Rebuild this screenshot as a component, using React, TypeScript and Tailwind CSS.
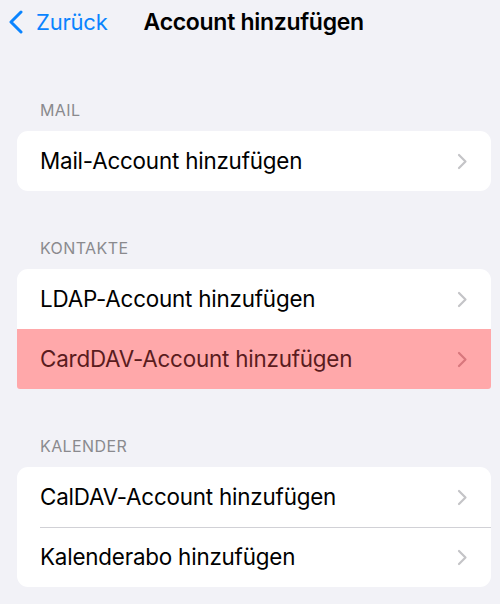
import React from "react";

type Row = { label: string; highlight?: boolean };

const sections: { title: string; rows: Row[] }[] = [
  { title: "MAIL", rows: [{ label: "Mail-Account hinzufügen" }] },
  {
    title: "KONTAKTE",
    rows: [{ label: "LDAP-Account hinzufügen" }, { label: "CardDAV-Account hinzufügen", highlight: true }],
  },
  { title: "KALENDER", rows: [{ label: "CalDAV-Account hinzufügen" }, { label: "Kalenderabo hinzufügen" }] },
];

function Chevron({ className }: { className: string }) {
  return (
    <svg width="11" height="17" viewBox="0 0 11 17" fill="none" className={className}>
      <path d="M2 2l6.5 6.5L2 15" stroke="currentColor" strokeWidth="2.2" strokeLinecap="round" strokeLinejoin="round" />
    </svg>
  );
}

export default function App() {
  return (
    <div className="min-h-[604px] bg-[#f2f2f7] font-['Inter',sans-serif] text-black antialiased">
      {/* nav bar */}
      <div className="flex h-[44px] items-center pl-[8px]">
        <div className="flex items-center gap-[12px] text-[#0a84ff]">
          <svg width="16" height="24" viewBox="0 0 16 24" fill="none">
            <path d="M13 2L3 12l10 10" stroke="currentColor" strokeWidth="3" strokeLinecap="round" strokeLinejoin="round" />
          </svg>
          <span className="text-[22px] tracking-[-0.2px]">Zurück</span>
        </div>
        <div className="ml-[36px] text-[23px] font-semibold tracking-[-0.3px]">Account hinzufügen</div>
      </div>

      <div className="pl-[17px] pr-[9px] pt-[56px]">
        {sections.map((s, si) => (
          <div key={s.title} className={si > 0 ? "mt-[47px]" : ""}>
            <div className="pl-[23px] pb-[11px] text-[16px] leading-[20px] tracking-[0.4px] text-[#8a8a8e]">{s.title}</div>
            <div className="rounded-[11px] bg-white">
              {s.rows.map((r, ri) => (
                <div key={r.label} className={r.highlight ? "rounded-b-[3px] bg-[#ffa8aa]" : ""}>
                  {ri > 0 && !r.highlight && <div className="ml-[23px] h-px bg-[#d1d1d6]" />}
                  <div className={`flex h-[60px] items-center justify-between pl-[23px] pr-[23px] ${ri > 0 && !r.highlight ? "-mt-px" : ""}`}>
                    <span className={`text-[22.4px] tracking-[-0.2px] ${r.highlight ? "text-[#5a1c1e]" : "text-black"}`}>{r.label}</span>
                    <Chevron className={r.highlight ? "text-[#d8777d]" : "text-[#c4c4c7]"} />
                  </div>
                </div>
              ))}
            </div>
          </div>
        ))}
      </div>
    </div>
  );
}
